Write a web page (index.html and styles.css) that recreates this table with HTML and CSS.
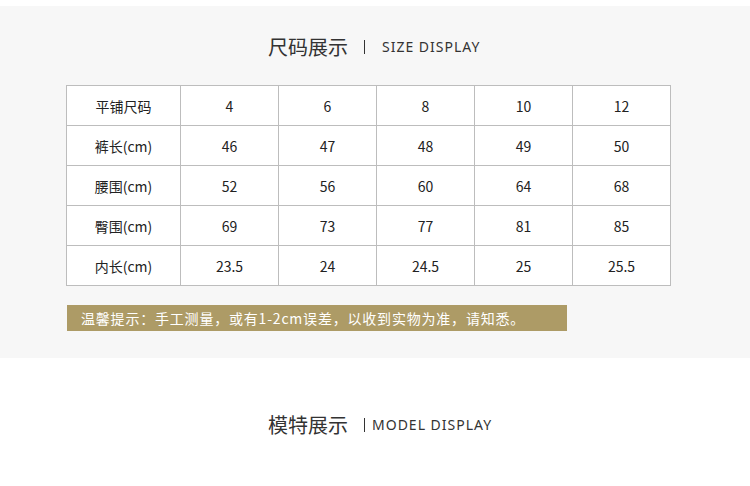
FILE: index.html
```html
<!DOCTYPE html>
<html lang="zh">
<head>
<meta charset="utf-8">
<link rel="stylesheet" href="styles.css">
</head>
<body>
<div class="page">
  <section class="size-section">
    <div class="title title-size">
      <span class="title-cn">尺码展示</span>
      <span class="title-sep"></span>
      <span class="title-en">SIZE DISPLAY</span>
    </div>
    <table class="size-table">
      <tr><td class="c-head">平铺尺码</td><td>4</td><td>6</td><td>8</td><td>10</td><td>12</td></tr>
      <tr><td class="c-head">裤长(cm)</td><td>46</td><td>47</td><td>48</td><td>49</td><td>50</td></tr>
      <tr><td class="c-head">腰围(cm)</td><td>52</td><td>56</td><td>60</td><td>64</td><td>68</td></tr>
      <tr><td class="c-head">臀围(cm)</td><td>69</td><td>73</td><td>77</td><td>81</td><td>85</td></tr>
      <tr><td class="c-head">内长(cm)</td><td>23.5</td><td>24</td><td>24.5</td><td>25</td><td>25.5</td></tr>
    </table>
    <div class="note">温馨提示：手工测量，或有1-2cm误差，以收到实物为准，请知悉。</div>
  </section>
  <section class="model-section">
    <div class="title title-model">
      <span class="title-cn">模特展示</span>
      <span class="title-sep"></span>
      <span class="title-en">MODEL DISPLAY</span>
    </div>
  </section>
</div>
</body>
</html>
```
FILE: styles.css
```css
html, body {
  margin: 0;
  padding: 0;
  background: #ffffff;
}
.page {
  width: 750px;
  height: 486px;
  overflow: hidden;
  padding-top: 6px;
  box-sizing: border-box;
  font-family: "Noto Sans CJK SC", "Noto Sans", sans-serif;
}
.size-section {
  background: #f7f7f7;
  height: 352px;
  padding-top: 27px;
  box-sizing: border-box;
}
.title {
  display: flex;
  align-items: center;
  height: 28px;
  padding-left: 268px;
  color: #333333;
}
.title-cn {
  font-size: 20px;
  line-height: 28px;
}
.title-sep {
  width: 1px;
  height: 14px;
  background: #333333;
}
.title-en {
  font-family: "Noto Sans", "Open Sans", sans-serif;
  font-size: 14px;
  letter-spacing: 1px;
  line-height: 28px;
}
.title-size .title-sep { margin: 0 17px 0 16px; }
.title-model .title-sep { margin: 0 7px 0 16px; }
.size-table {
  margin: 24px 0 0 66px;
  border-collapse: collapse;
  background: #ffffff;
}
.size-table td {
  border: 1px solid #bdbdbd;
  height: 39px;
  padding: 0;
  text-align: center;
  vertical-align: middle;
  font-size: 14px;
  color: #222222;
  width: 97px;
}
.size-table td.c-head {
  width: 113px;
}
.note {
  margin: 19px 0 0 67px;
  width: 500px;
  height: 26px;
  box-sizing: border-box;
  background: #ad9b66;
  color: #ffffff;
  font-size: 14px;
  letter-spacing: 0.8px;
  line-height: 26px;
  padding-left: 14px;
  white-space: nowrap;
}
.model-section {
  padding-top: 53px;
}
```
